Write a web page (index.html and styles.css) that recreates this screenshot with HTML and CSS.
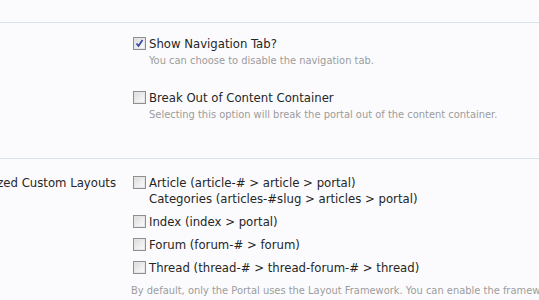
FILE: index.html
```html
<!DOCTYPE html>
<html>
<head>
<meta charset="utf-8">
<link rel="stylesheet" href="styles.css">
</head>
<body>
<div class="page">
  <div class="top"></div>
  <div class="row row-first">
    <div class="label"></div>
    <div class="options">
      <div class="opt">
        <div class="line"><span class="cb checked"><svg viewBox="0 0 13 13" width="13" height="13"><path d="M3.5 6.5 L5.5 9 L9.5 3" fill="none" stroke="#3a4ea0" stroke-width="1.8"/></svg></span><span class="text">Show Navigation Tab?</span></div>
        <div class="hint">You can choose to disable the navigation tab.</div>
      </div>
      <div class="opt opt-gap">
        <div class="line"><span class="cb"></span><span class="text">Break Out of Content Container</span></div>
        <div class="hint">Selecting this option will break the portal out of the content container.</div>
      </div>
    </div>
  </div>
  <div class="row row-second">
    <div class="label">Specialized Custom Layouts</div>
    <div class="options">
      <div class="line"><span class="cb"></span><span class="text">Article (article-# &gt; article &gt; portal)<br>Categories (articles-#slug &gt; articles &gt; portal)</span></div>
      <div class="line spaced"><span class="cb"></span><span class="text">Index (index &gt; portal)</span></div>
      <div class="line spaced"><span class="cb"></span><span class="text">Forum (forum-# &gt; forum)</span></div>
      <div class="line spaced"><span class="cb"></span><span class="text">Thread (thread-# &gt; thread-forum-# &gt; thread)</span></div>
      <div class="note">By default, only the Portal uses the Layout Framework. You can enable the framework on other pages by selecting them here; each uses its own layout.</div>
    </div>
  </div>
</div>
</body>
</html>
```

FILE: styles.css
```css
html, body {
  margin: 0;
  padding: 0;
  background: #fbfbfd;
  overflow: hidden;
}
body {
  width: 539px;
  height: 300px;
  font-family: "DejaVu Sans Condensed", "DejaVu Sans", sans-serif;
  color: #262626;
}
.page {
  margin-left: -90px;
  width: 720px;
}
.top {
  height: 22px;
  border-bottom: 1px solid #d6e3e8;
}
.row {
  display: grid;
  grid-template-columns: 206px 1fr;
  column-gap: 17px;
}
.row-first {
  padding-top: 13px;
  padding-bottom: 36px;
  border-bottom: 1px solid #d6e3e8;
}
.row-second {
  padding-top: 16px;
}
.label {
  text-align: right;
  font-size: 13px;
  line-height: 16px;
  white-space: nowrap;
  color: #262626;
}
.options {
  display: flex;
  flex-direction: column;
}
.opt-gap {
  margin-top: 22px;
}
.line {
  display: flex;
  align-items: flex-start;
  font-size: 13px;
  line-height: 16px;
}
.line.spaced {
  margin-top: 7px;
}
.cb {
  flex: none;
  box-sizing: border-box;
  width: 13px;
  height: 13px;
  margin-top: 1px;
  margin-right: 3px;
  border: 1px solid #8f8f8f;
  background: linear-gradient(135deg, #d8d8d8 0%, #f0f0f0 60%, #fbfbfb 100%);
  box-shadow: inset 0 0 0 1px #e6e6e6;
  position: relative;
}
.cb svg {
  position: absolute;
  left: -1px;
  top: -1px;
}
.text {
  white-space: nowrap;
}
.hint {
  margin-top: 2px;
  padding-left: 16px;
  font-size: 11px;
  line-height: 14px;
  color: #9c9c9c;
  white-space: nowrap;
}
.note {
  margin-top: 8px;
  margin-left: -2px;
  font-size: 11px;
  line-height: 14px;
  color: #9c9c9c;
  width: 560px;
}
```
